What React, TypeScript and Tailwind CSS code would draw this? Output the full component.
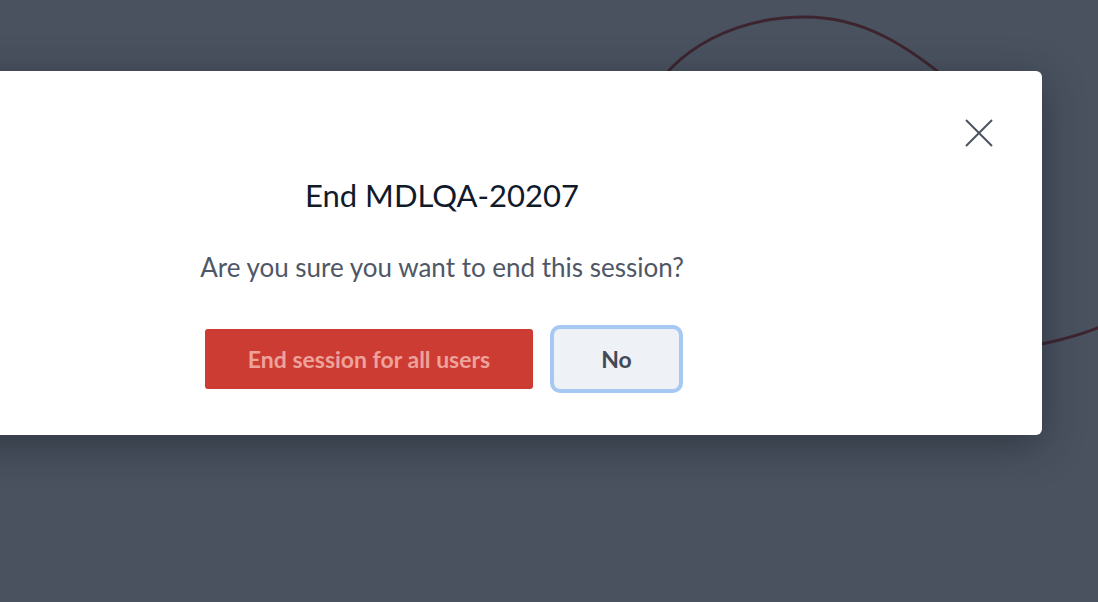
export default function App() {
  return (
    <div className="relative h-[602px] w-[1098px] overflow-hidden bg-[#4a5260] font-['Lato',sans-serif]">
      {/* background drawing behind the dialog */}
      <svg className="absolute inset-0" width="1098" height="602" viewBox="0 0 1098 602" fill="none">
        <path
          d="M 645 105 C 675 45, 740 17, 805 17 C 860 17, 905 42, 960 90"
          stroke="#3d2530"
          strokeWidth="3"
        />
        <path d="M 1020 348 C 1050 343, 1075 337, 1100 327" stroke="#3d2530" strokeWidth="3" />
      </svg>

      <div className="relative mt-[71px] ml-[-158px] flex w-[1200px] flex-col items-center rounded-md bg-white pt-[48px] pb-[46px] shadow-[0_10px_40px_rgba(20,24,32,0.45)]">
        <button className="absolute right-[49px] top-[48px] text-[#4b5260]">
          <svg width="28" height="28" viewBox="0 0 28 28" fill="none" stroke="currentColor" strokeWidth="2">
            <path d="M1 1 L27 27 M27 1 L1 27" />
          </svg>
        </button>

        <h2 className="mt-[56px] text-[31px] leading-[40px] text-[#111a2b]">End MDLQA-20207</h2>
        <p className="mt-[36px] text-[26px] leading-[32px] text-[#4f5766]">Are you sure you want to end this session?</p>

        <div className="mt-[46px] flex items-center gap-[21px]">
          <button className="h-[60px] w-[328px] rounded-[3px] bg-[#cc3c32] text-[23px] font-bold text-[#eea29c]">
            End session for all users
          </button>
          <button className="h-[60px] w-[125px] rounded-[6px] bg-[#eef1f6] text-[23px] font-bold text-[#434a57] ring-4 ring-[#a6c9f3]">
            No
          </button>
        </div>
      </div>
    </div>
  );
}
